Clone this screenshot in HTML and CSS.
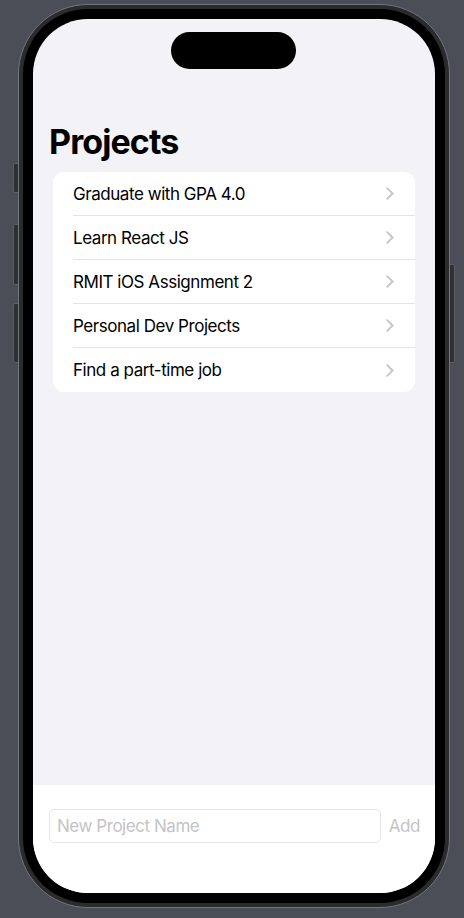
FILE: index.html
```html
<!DOCTYPE html>
<html lang="en">
<head>
<meta charset="utf-8">
<title>Projects</title>
<link rel="stylesheet" href="styles.css">
</head>
<body>
  <div class="phone">
    <span class="side-btn side-btn--action"></span>
    <span class="side-btn side-btn--vol-up"></span>
    <span class="side-btn side-btn--vol-down"></span>
    <span class="side-btn side-btn--power"></span>

    <div class="device">
      <div class="bezel">
        <div class="screen">
          <div class="island"></div>

          <main class="content">
            <h1 class="large-title">Projects</h1>
            <ul class="list">
              <li class="row"><span class="row-label">Graduate with GPA 4.0</span><svg class="chevron" viewBox="0 0 8 13" aria-hidden="true"><path d="M1.2 1.2 L6.6 6.5 L1.2 11.8"/></svg></li>
              <li class="row"><span class="row-label">Learn React JS</span><svg class="chevron" viewBox="0 0 8 13" aria-hidden="true"><path d="M1.2 1.2 L6.6 6.5 L1.2 11.8"/></svg></li>
              <li class="row"><span class="row-label">RMIT iOS Assignment 2</span><svg class="chevron" viewBox="0 0 8 13" aria-hidden="true"><path d="M1.2 1.2 L6.6 6.5 L1.2 11.8"/></svg></li>
              <li class="row"><span class="row-label">Personal Dev Projects</span><svg class="chevron" viewBox="0 0 8 13" aria-hidden="true"><path d="M1.2 1.2 L6.6 6.5 L1.2 11.8"/></svg></li>
              <li class="row"><span class="row-label">Find a part-time job</span><svg class="chevron" viewBox="0 0 8 13" aria-hidden="true"><path d="M1.2 1.2 L6.6 6.5 L1.2 11.8"/></svg></li>
            </ul>
          </main>

          <footer class="composer">
            <input class="name-field" type="text" placeholder="New Project Name">
            <button class="add-btn" type="button" disabled>Add</button>
          </footer>
        </div>
      </div>
    </div>
  </div>
</body>
</html>
```

FILE: styles.css
```css
* {
  box-sizing: border-box;
}

html,
body {
  margin: 0;
  height: 918px;
  background: #4b4e56;
  overflow: hidden;
}

body {
  padding: 4px 0 0 18px;
  font-family: Inter, "Liberation Sans", sans-serif;
  -webkit-font-smoothing: antialiased;
}

/* ---- device frame ---- */
.phone {
  position: relative;
  width: 432px;
  height: 904px;
}

.side-btn {
  position: absolute;
  width: 8px;
  background: #2e3034;
  border: 1px solid #5a5d63;
  border-radius: 2px;
  z-index: 0;
}

.side-btn--action   { left: -5px; top: 159px; height: 30px; }
.side-btn--vol-up   { left: -5px; top: 220px; height: 61px; }
.side-btn--vol-down { left: -5px; top: 299px; height: 60px; }
.side-btn--power    { right: -5px; top: 260px; height: 99px; }

.device {
  position: relative;
  z-index: 1;
  width: 100%;
  height: 100%;
  padding: 4px;
  border: 1px solid #73767c;
  border-radius: 70px;
  background: #2b2b2d;
}

.bezel {
  width: 100%;
  height: 100%;
  padding: 10px;
  border-radius: 65px;
  background: #000;
}

.screen {
  position: relative;
  display: flex;
  flex-direction: column;
  width: 100%;
  height: 100%;
  border-radius: 55px;
  overflow: hidden;
  background: #f2f2f7;
}

.island {
  position: absolute;
  top: 13px;
  left: 138px;
  width: 125px;
  height: 37px;
  border-radius: 19px;
  background: #000;
}

/* ---- list screen ---- */
.content {
  flex: 1;
  padding-top: 102px;
}

.large-title {
  margin: 0 0 10px;
  padding-left: 16px;
  font-size: 34px;
  line-height: 41px;
  font-weight: 700;
  letter-spacing: -0.9px;
  color: #000;
}

.list {
  margin: 0 20px;
  padding: 0;
  list-style: none;
  background: #fff;
  border-radius: 11px;
  overflow: hidden;
}

.row {
  display: flex;
  align-items: center;
  height: 44px;
  margin-left: 20px;
  padding-right: 21px;
  border-bottom: 1px solid #e4e4e7;
}

.row:last-child {
  border-bottom: none;
}

.row-label {
  flex: 1;
  font-size: 17px;
  letter-spacing: -0.45px;
  color: #000;
}

.chevron {
  width: 8px;
  height: 13px;
  fill: none;
  stroke: #c4c4c7;
  stroke-width: 1.8;
  stroke-linecap: round;
  stroke-linejoin: round;
}

/* ---- bottom composer ---- */
.composer {
  display: flex;
  align-items: flex-start;
  gap: 8px;
  height: 108px;
  padding: 24px 15px 0 16px;
  background: #fff;
}

.name-field {
  flex: 1;
  min-width: 0;
  height: 34px;
  padding: 0 7px;
  border: 1px solid #e6e6e8;
  border-radius: 5px;
  background: #fff;
  font-family: inherit;
  font-size: 17px;
  letter-spacing: -0.45px;
  color: #000;
  outline: none;
}

.name-field::placeholder {
  color: #c4c4c7;
}

.add-btn {
  height: 34px;
  padding: 0;
  border: none;
  background: none;
  font-family: inherit;
  font-size: 17px;
  letter-spacing: -0.45px;
  color: #c4c4c7;
}
```
